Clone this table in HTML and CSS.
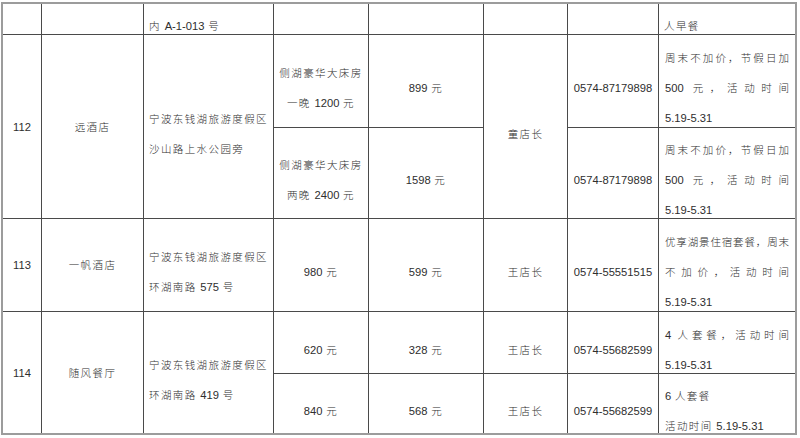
FILE: index.html
```html
<!DOCTYPE html>
<html lang="zh-CN">
<head>
<meta charset="utf-8">
<title>活动酒店列表</title>
<link rel="stylesheet" href="styles.css">
</head>
<body>
<div class="tbl">
  <!-- row 0 (continued) -->
  <div class="c"></div>
  <div class="c"></div>
  <div class="c l off"><div>内 <span class="n">A-1-013</span> 号</div></div>
  <div class="c"></div>
  <div class="c"></div>
  <div class="c"></div>
  <div class="c"></div>
  <div class="c l off j"><div>人早餐</div></div>

  <!-- 112 -->
  <div class="c ctr r2"><span class="n">112</span></div>
  <div class="c ctr r2">远酒店</div>
  <div class="c l off r2"><div>宁波东钱湖旅游度假区</div><div>沙山路上水公园旁</div></div>
  <div class="c ctr off"><div>侧湖豪华大床房</div><div>一晚 <span class="n">1200</span> 元</div></div>
  <div class="c ctr off"><div><span class="n">899</span> 元</div></div>
  <div class="c ctr off r2"><div>童店长</div></div>
  <div class="c ctr off"><div><span class="n">0574-87179898</span></div></div>
  <div class="c off j"><div class="jl">周末不加价，节假日加</div><div class="jl"><span class="n">500</span> 元，活动时间</div><div><span class="n">5.19-5.31</span></div></div>

  <div class="c ctr off"><div>侧湖豪华大床房</div><div>两晚 <span class="n">2400</span> 元</div></div>
  <div class="c ctr off"><div><span class="n">1598</span> 元</div></div>
  <div class="c ctr off"><div><span class="n">0574-87179898</span></div></div>
  <div class="c off j"><div class="jl">周末不加价，节假日加</div><div class="jl"><span class="n">500</span> 元，活动时间</div><div><span class="n">5.19-5.31</span></div></div>

  <!-- 113 -->
  <div class="c ctr"><span class="n">113</span></div>
  <div class="c ctr">一帆酒店</div>
  <div class="c l off"><div>宁波东钱湖旅游度假区</div><div>环湖南路 <span class="n">575</span> 号</div></div>
  <div class="c ctr off"><div><span class="n">980</span> 元</div></div>
  <div class="c ctr off"><div><span class="n">599</span> 元</div></div>
  <div class="c ctr off"><div>王店长</div></div>
  <div class="c ctr off"><div><span class="n">0574-55551515</span></div></div>
  <div class="c off j"><div class="jl">优享湖景住宿套餐，周末</div><div class="jl">不加价，活动时间</div><div><span class="n">5.19-5.31</span></div></div>

  <!-- 114 -->
  <div class="c ctr r2"><span class="n">114</span></div>
  <div class="c ctr r2">随风餐厅</div>
  <div class="c l off r2"><div>宁波东钱湖旅游度假区</div><div>环湖南路 <span class="n">419</span> 号</div></div>
  <div class="c ctr off"><div><span class="n">620</span> 元</div></div>
  <div class="c ctr off"><div><span class="n">328</span> 元</div></div>
  <div class="c ctr off"><div>王店长</div></div>
  <div class="c ctr off"><div><span class="n">0574-55682599</span></div></div>
  <div class="c off j"><div class="jl"><span class="n">4</span> 人套餐，活动时间</div><div><span class="n">5.19-5.31</span></div></div>

  <div class="c ctr off"><div><span class="n">840</span> 元</div></div>
  <div class="c ctr off"><div><span class="n">568</span> 元</div></div>
  <div class="c ctr off"><div>王店长</div></div>
  <div class="c ctr off"><div><span class="n">0574-55682599</span></div></div>
  <div class="c off j"><div><span class="n">6</span> 人套餐</div><div>活动时间 <span class="n">5.19-5.31</span></div></div>
</div>
</body>
</html>
```

FILE: styles.css
```css
html, body {
  margin: 0;
  padding: 0;
  background: #ffffff;
}

body {
  font-family: "Noto Sans CJK SC", "Liberation Sans", sans-serif;
  font-size: 10.5px;
  font-weight: 300;
  letter-spacing: 1.4px;
  color: #2e2e2e;
}

.tbl {
  display: grid;
  grid-template-columns: 38px 101px 129px 94px 114px 83px 90px 136px;
  grid-template-rows: 30px 92px 90px 92px 61px 59px;
  gap: 1px;
  background: #4a4a4a;
  border: 2px solid #9c9c9c;
  width: max-content;
  margin: 2px 0 0 1px;
}

.c {
  background: #ffffff;
  display: flex;
  flex-direction: column;
  justify-content: center;
  line-height: 30px;
  white-space: nowrap;
}

.r2 {
  grid-row: span 2;
}

.ctr {
  text-align: center;
}

.l {
  text-align: left;
  padding-left: 5px;
}

.j {
  padding: 0 6px 0 6px;
}

.off {
  padding-top: 14px;
}

.j.off {
  padding: 14px 6px 0 6px;
}

.l.off {
  padding: 14px 0 0 5px;
}

.jl {
  text-align: justify;
  text-align-last: justify;
  letter-spacing: 0;
}

.n {
  font-family: "Liberation Sans", Arial, sans-serif;
  font-weight: 400;
  font-size: 11.2px;
  letter-spacing: 0;
}
```
